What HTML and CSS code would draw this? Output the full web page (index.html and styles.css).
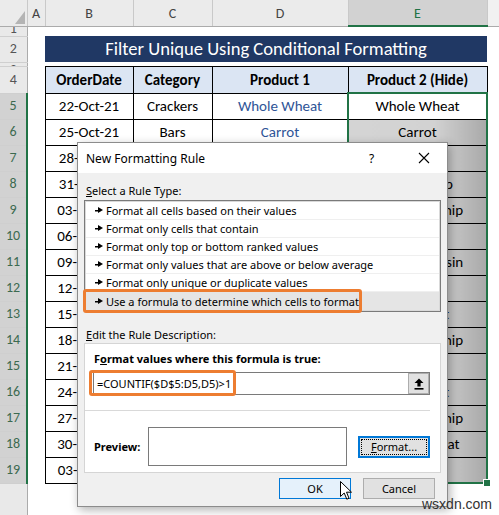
FILE: index.html
```html
<!DOCTYPE html>
<html lang="en">
<head>
    <meta charset="UTF-8">
    <title>Filter Unique Using Conditional Formatting</title>
    <link rel="stylesheet" href="styles.css">
</head>
<body>
    <table class="sheet">
        <colgroup>
            <col class="c-rh"><col class="c-a"><col class="c-b"><col class="c-c"><col class="c-d"><col class="c-e"><col class="c-f">
        </colgroup>
        <tr class="row-colhead">
            <th class="corner"><span class="tri"></span></th>
            <th>A</th><th>B</th><th>C</th><th>D</th><th class="sel">E</th><th class="last"></th>
        </tr>
        <tr class="row-1"><td class="rh"><div class="clip clip-1">1</div></td><td colspan="6"></td></tr>
        <tr class="row-2"><td class="rh">2</td><td></td><td class="banner" colspan="4">Filter Unique Using Conditional Formatting</td><td></td></tr>
        <tr class="row-3"><td class="rh"><div class="clip clip-3">3</div></td><td colspan="6"></td></tr>
        <tr class="row-4">
            <td class="rh">4</td><td></td>
            <td class="t hd">OrderDate</td><td class="t hd">Category</td><td class="t hd">Product 1</td><td class="t hd">Product 2 (Hide)</td><td></td>
        </tr>
        <tr><td class="rh sel">5</td><td></td><td class="t">22-Oct-21</td><td class="t">Crackers</td><td class="t blue">Whole Wheat</td><td class="t">Whole Wheat</td><td></td></tr>
        <tr><td class="rh sel">6</td><td></td><td class="t">25-Oct-21</td><td class="t">Bars</td><td class="t blue">Carrot</td><td class="t fill">Carrot</td><td></td></tr>
        <tr><td class="rh sel">7</td><td></td><td class="t">28-Oct-21</td><td class="t">Bars</td><td class="t blue">Carrot</td><td class="t fill">Carrot</td><td></td></tr>
        <tr><td class="rh sel">8</td><td></td><td class="t">31-Oct-21</td><td class="t">Snacks</td><td class="t blue">Potato Chip</td><td class="t fill">Potato Chip</td><td></td></tr>
        <tr><td class="rh sel">9</td><td></td><td class="t">03-Nov-21</td><td class="t">Cookies</td><td class="t blue">Chocolate Chip</td><td class="t fill">Chocolate Chip</td><td></td></tr>
        <tr><td class="rh sel">10</td><td></td><td class="t">06-Nov-21</td><td class="t">Bars</td><td class="t blue">Carrot</td><td class="t fill">Carrot</td><td></td></tr>
        <tr><td class="rh sel">11</td><td></td><td class="t">09-Nov-21</td><td class="t">Cookies</td><td class="t blue">Oatmeal Raisin</td><td class="t fill">Oatmeal Raisin</td><td></td></tr>
        <tr><td class="rh sel">12</td><td></td><td class="t">12-Nov-21</td><td class="t">Bars</td><td class="t blue">Bran</td><td class="t fill">Bran</td><td></td></tr>
        <tr><td class="rh sel">13</td><td></td><td class="t">15-Nov-21</td><td class="t">Cookies</td><td class="t blue">Arrowroot</td><td class="t fill">Arrowroot</td><td></td></tr>
        <tr><td class="rh sel">14</td><td></td><td class="t">18-Nov-21</td><td class="t">Cookies</td><td class="t blue">Chocolate Chip</td><td class="t fill">Chocolate Chip</td><td></td></tr>
        <tr><td class="rh sel">15</td><td></td><td class="t">21-Nov-21</td><td class="t">Bars</td><td class="t blue">Bran</td><td class="t fill">Bran</td><td></td></tr>
        <tr><td class="rh sel">16</td><td></td><td class="t">24-Nov-21</td><td class="t">Cookies</td><td class="t blue">Arrowroot</td><td class="t fill">Arrowroot</td><td></td></tr>
        <tr><td class="rh sel">17</td><td></td><td class="t">27-Nov-21</td><td class="t">Cookies</td><td class="t blue">Chocolate Chip</td><td class="t fill">Chocolate Chip</td><td></td></tr>
        <tr><td class="rh sel">18</td><td></td><td class="t">30-Nov-21</td><td class="t">Crackers</td><td class="t blue">Whole Wheat</td><td class="t fill">Whole Wheat</td><td></td></tr>
        <tr><td class="rh sel">19</td><td></td><td class="t">03-Dec-21</td><td class="t">Bars</td><td class="t blue">Carrot</td><td class="t fill">Carrot</td><td></td></tr>
        <tr class="row-20"><td class="rh"></td><td colspan="6"></td></tr>
    </table>

    <!-- selected range E5:E19 -->
    <div class="selection"></div>
    <div class="fill-handle"></div>

    <div class="dialog">
        <div class="dlg-title">
            <span>New Formatting Rule</span>
            <span class="help">?</span>
            <svg class="close" width="12" height="12" viewBox="0 0 12 12"><path d="M1 1L11 11M11 1L1 11" stroke="#000" stroke-width="1.1"/></svg>
        </div>
        <div class="dlg-body">
            <div class="label label-top"><u>S</u>elect a Rule Type:</div>
            <ul class="rule-list">
                <li><i class="arrow"></i>Format all cells based on their values</li>
                <li><i class="arrow"></i>Format only cells that contain</li>
                <li><i class="arrow"></i>Format only top or bottom ranked values</li>
                <li><i class="arrow"></i>Format only values that are above or below average</li>
                <li><i class="arrow"></i>Format only unique or duplicate values</li>
                <li class="picked"><i class="arrow"></i>Use a formula to determine which cells to format</li>
            </ul>
            <div class="label label-edit"><u>E</u>dit the Rule Description:</div>
            <div class="desc">
                <div class="desc-title">F<u>o</u>rmat values where this formula is true:</div>
                <div class="formula">
                    <span class="formula-text">=COUNTIF($D$5:D5,D5)&gt;1</span>
                    <span class="ref-btn">
                        <svg width="10" height="12" viewBox="0 0 10 12"><path d="M5 0.5L9.5 5H6.6V8.5H3.4V5H0.5Z" fill="#000"/><rect x="0.5" y="10" width="9" height="1.6" fill="#000"/></svg>
                    </span>
                </div>
                <div class="desc-sep"></div>
                <div class="preview-row">
                    <span class="preview-label">Preview:</span>
                    <div class="preview-box"></div>
                    <div class="btn btn-format"><span class="focus"><u>F</u>ormat...</span></div>
                </div>
            </div>
            <div class="dlg-buttons">
                <div class="btn btn-ok">OK</div>
                <div class="btn">Cancel</div>
            </div>
        </div>
        <div class="mark mark-rule"></div>
        <div class="mark mark-formula"></div>
    </div>

    <svg class="cursor" width="13" height="20" viewBox="0 0 13 20"><path d="M0.5 0.5V15.5L4.2 12L6.8 18.2L9 17.2L6.5 11.2H11.5Z" fill="#fff" stroke="#000" stroke-width="1" stroke-linejoin="round"/></svg>

    <div class="watermark">wsxdn.com</div>
</body>
</html>
```

FILE: styles.css
```css
body {
    margin: 0;
    width: 499px;
    height: 515px;
    overflow: hidden;
    position: relative;
    background: #fff;
    font-family: Carlito, Lato, "Liberation Sans", sans-serif;
}

/* worksheet grid */
.sheet {
    border-collapse: collapse;
    table-layout: fixed;
    width: 499px;
}
.c-rh { width: 27px; }
.c-a { width: 18px; }
.c-b { width: 88px; }
.c-c { width: 79px; }
.c-d { width: 136px; }
.c-e { width: 139px; }
.c-f { width: 12px; }
.sheet td,
.sheet th {
    padding: 0;
    overflow: hidden;
    white-space: nowrap;
    text-align: center;
    font-size: 15px;
    line-height: 18px;
    color: #000;
}

.sheet tr { height: 26px; }
.sheet tr.row-colhead { height: 26px; }
.sheet tr.row-1 { height: 10px; }
.sheet tr.row-2 { height: 26px; }
.sheet tr.row-3 { height: 4px; }
.sheet tr.row-4 { height: 27px; }
.sheet tr.row-20 { height: 32px; }

.row-colhead th {
    background: #ebebeb;
    color: #444;
    font-weight: normal;
    font-size: 14px;
    padding-top: 3px;
    border-right: 1px solid #c9c9c9;
    border-bottom: 1px solid #ababab;
}
.row-colhead th.sel {
    background: #d2d2d2;
    color: #217346;
    border-bottom: 2px solid #217346;
}
.row-colhead th.last { background: #f1f1f1; border-right: none; }
.corner { position: relative; }
.tri {
    position: absolute;
    right: 2px;
    bottom: 2px;
    width: 0;
    height: 0;
    border-left: 10px solid transparent;
    border-bottom: 13px solid #b4b4b4;
}

.rh {
    background: #e9e9e9;
    color: #555 !important;
    font-size: 14px !important;
    border-right: 1px solid #ababab;
    border-bottom: 1px solid #cfcfcf;
}
.rh.sel {
    background: #d2d2d2;
    color: #3c6a50 !important;
    border-right: 2px solid #217346;
}
.row-1 td, .row-3 td { line-height: 0; font-size: 0; }
.clip { overflow: hidden; font-size: 14px; }
.clip-1 { height: 9px; line-height: 3px; }
.clip-3 { height: 3px; line-height: 13px; }

.banner {
    background: #203864;
    color: #fff !important;
    font-size: 18.6px !important;
}

.t { border: 1px solid #000; }
.hd {
    background: #dbe5f3;
    font-weight: bold;
}
.blue { color: #2f5597 !important; }
.fill {
    background: linear-gradient(to right, #d4d4d4 0%, #d2d2d2 62%, #a9a9a9 100%);
}

.selection {
    position: absolute;
    left: 347px;
    top: 92px;
    width: 137px;
    height: 388px;
    border: 2px solid #217346;
}
.fill-handle {
    position: absolute;
    left: 483px;
    top: 479px;
    width: 6px;
    height: 6px;
    background: #217346;
    border: 1px solid #fff;
}

/* New Formatting Rule window */
.dialog {
    position: absolute;
    left: 77px;
    top: 142px;
    width: 371px;
    height: 365px;
    box-sizing: border-box;
    border: 1px solid #8c8c8c;
    background: #f0f0f0;
    box-shadow: 2px 3px 9px rgba(0, 0, 0, 0.3);
    font-family: "Noto Sans", "Open Sans", sans-serif;
    font-size: 11px;
    color: #000;
    display: flex;
    flex-direction: column;
}
.dlg-title {
    height: 30px;
    flex: none;
    background: #fff;
    display: flex;
    align-items: center;
    padding-left: 8px;
    font-size: 12px;
    position: relative;
}
.help {
    position: absolute;
    left: 291px;
    top: 7px;
    font-size: 12px;
}
.close {
    position: absolute;
    left: 340px;
    top: 9px;
}
.dlg-body {
    flex: 1;
    padding: 0 6px;
}
.label {
    height: 16px;
    line-height: 16px;
    padding-left: 2px;
}
.label-top { margin-top: 10px; margin-bottom: 1px; }
.label-edit { margin-top: 15px; }

.rule-list {
    list-style: none;
    margin: 0;
    height: 112px;
    box-sizing: border-box;
    background: #fff;
    border: 1px solid #7a7a7a;
    box-shadow: inset 0 0 0 1px #d9d9d9;
    padding: 1px;
}
.rule-list li {
    height: 18px;
    line-height: 17px;
    box-sizing: border-box;
    border-bottom: 1px solid #efefef;
    padding-left: 9px;
    display: flex;
    align-items: center;
}
.rule-list li.picked { background: #e5e5e5; border-bottom: none; }
.arrow {
    width: 8px;
    height: 7px;
    margin-right: 3px;
    background:
        linear-gradient(#000, #000) 0 3px / 4px 1.5px no-repeat;
    position: relative;
}
.arrow::after {
    content: "";
    position: absolute;
    left: 3px;
    top: 0;
    border-left: 5px solid #000;
    border-top: 3.5px solid transparent;
    border-bottom: 3.5px solid transparent;
}

.desc {
    height: 130px;
    box-sizing: border-box;
    background: #fff;
    border: 1px solid #d5d5d5;
    padding-top: 7px;
}
.desc-title {
    font-weight: bold;
    padding-left: 9px;
    height: 16px;
    line-height: 16px;
}
.formula {
    margin: 5px 10px 0 8px;
    height: 23px;
    box-sizing: border-box;
    border: 1px solid #7a7a7a;
    display: flex;
    align-items: center;
    justify-content: space-between;
}
.formula-text { padding-left: 3px; }
.ref-btn {
    width: 21px;
    height: 21px;
    box-sizing: border-box;
    background: #e1e1e1;
    border: 1px solid #adadad;
    display: flex;
    align-items: center;
    justify-content: center;
}
.desc-sep {
    margin: 15px 10px 0 0;
    border-top: 1px solid #d9d9d9;
}
.preview-row {
    display: flex;
    align-items: center;
    margin-top: 16px;
    padding-left: 9px;
}
.preview-label {
    font-weight: bold;
    width: 54px;
}
.preview-box {
    width: 199px;
    height: 39px;
    box-sizing: border-box;
    border: 1px solid #7a7a7a;
    background: #fff;
}
.btn {
    width: 72px;
    height: 21px;
    box-sizing: border-box;
    background: #e1e1e1;
    border: 1px solid #adadad;
    display: flex;
    align-items: center;
    justify-content: center;
}
.btn-format {
    margin-left: 11px;
    height: 22px;
    border: 2px solid #0078d7;
    padding: 1px;
}
.btn-format .focus {
    flex: 1;
    align-self: stretch;
    border: 1px dotted #000;
    display: flex;
    align-items: center;
    justify-content: center;
}
.dlg-buttons {
    display: flex;
    justify-content: flex-end;
    gap: 12px;
    margin-top: 5px;
    padding-right: 6px;
}
.btn-ok {
    background: #e5f1fb;
    border-color: #0078d7;
}

/* orange call-outs */
.mark {
    position: absolute;
    border: 3px solid #ed7d31;
    border-radius: 3px;
}
.mark-rule { left: 5px; top: 146px; width: 273px; height: 18px; }
.mark-formula { left: 11px; top: 227px; width: 141px; height: 20px; }

.cursor {
    position: absolute;
    left: 340px;
    top: 481px;
}

.watermark {
    position: absolute;
    left: 422px;
    top: 496px;
    font-family: "Liberation Sans", Arial, sans-serif;
    font-size: 14px;
    color: #333;
}
```
